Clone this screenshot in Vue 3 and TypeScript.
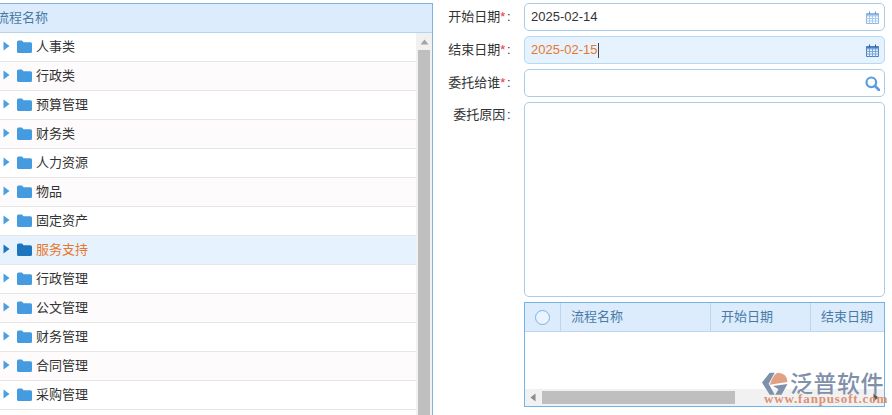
<script setup lang="ts">
interface Row { name: string; active?: boolean }
const rows: Row[] = [
  { name: '人事类' }, { name: '行政类' }, { name: '预算管理' }, { name: '财务类' },
  { name: '人力资源' }, { name: '物品' }, { name: '固定资产' },
  { name: '服务支持', active: true },
  { name: '行政管理' }, { name: '公文管理' }, { name: '财务管理' }, { name: '合同管理' }, { name: '采购管理' },
]
</script>

<template>
  <div class="page">
    <section class="tree">
      <div class="tree-head"><span>流程名称</span></div>
      <div class="tree-body">
        <ul class="tree-list">
          <li v-for="r in rows" :key="r.name" class="tree-row" :class="{ active: r.active }">
            <svg class="caret" width="7" height="10" viewBox="0 0 7 10"><path d="M0.5 0.5 L6.5 5 L0.5 9.5 Z" /></svg>
            <svg class="folder" width="15" height="13" viewBox="0 0 15 13"><path d="M0 2 Q0 0.5 1.5 0.5 H5 L6.5 2.2 H13.5 Q15 2.2 15 3.7 V11.5 Q15 13 13.5 13 H1.5 Q0 13 0 11.5 Z" /></svg>
            <span class="tree-name">{{ r.name }}</span>
          </li>
        </ul>
        <div class="vbar">
          <div class="vbar-up"><svg width="9" height="6" viewBox="0 0 9 6"><path d="M4.5 0.5 L8.5 5.5 H0.5 Z" /></svg></div>
          <div class="vbar-thumb"></div>
        </div>
      </div>
    </section>

    <section class="form">
      <label class="lbl">开始日期<i>*</i><b>:</b></label>
      <div class="field">
        <span class="val">2025-02-14</span>
        <svg class="cal" width="13" height="13" viewBox="0 0 13 13"><path d="M0.5 2.5 H12.5 V12.5 H0.5 Z" fill="#fff" stroke="#8db6e6"/><path d="M0.5 5 H12.5 M0.5 7.5 H12.5 M0.5 10 H12.5 M3.5 4.5 V12.5 M6.5 4.5 V12.5 M9.5 4.5 V12.5" stroke="#a9cbf0" fill="none"/><path d="M0.5 2.5 H12.5 V4.5 H0.5 Z" fill="#8db6e6"/><path d="M3.5 0.5 V3 M9.5 0.5 V3" stroke="#6d93c4" fill="none"/></svg>
      </div>

      <label class="lbl">结束日期<i>*</i><b>:</b></label>
      <div class="field focus">
        <span class="val orange">2025-02-15</span><span class="caret-line"></span>
        <svg class="cal" width="13" height="13" viewBox="0 0 13 13"><path d="M0.5 2.5 H12.5 V12.5 H0.5 Z" fill="#e6f3fe" stroke="#4a82bf"/><path d="M0.5 5 H12.5 M0.5 7.5 H12.5 M0.5 10 H12.5 M3.5 4.5 V12.5 M6.5 4.5 V12.5 M9.5 4.5 V12.5" stroke="#7ba7d8" fill="none"/><path d="M0.5 2.5 H12.5 V4.5 H0.5 Z" fill="#4a82bf"/><path d="M3.5 0.5 V3 M9.5 0.5 V3" stroke="#2f6199" fill="none"/></svg>
      </div>

      <label class="lbl">委托给谁<i>*</i><b>:</b></label>
      <div class="field">
        <svg class="search" width="15" height="15" viewBox="0 0 15 15"><circle cx="6.3" cy="6.3" r="4.8" fill="none" stroke="#5b9bdf" stroke-width="2.2"/><path d="M10 10 L14 14" stroke="#5b9bdf" stroke-width="2.6" stroke-linecap="round"/></svg>
      </div>

      <label class="lbl lbl-top">委托原因<b>:</b></label>
      <div class="area"></div>

      <div class="grid">
        <div class="grid-head">
          <div class="gh gh-check"><span class="radio"></span></div>
          <div class="gh gh-name">流程名称</div>
          <div class="gh gh-date">开始日期</div>
          <div class="gh gh-last">结束日期</div>
        </div>
        <div class="grid-body"></div>
        <div class="hbar">
          <svg class="hbar-left" width="6" height="9" viewBox="0 0 6 9"><path d="M5.5 0.5 V8.5 L0.5 4.5 Z" /></svg>
          <div class="hbar-thumb"></div>
          <svg class="hbar-right" width="6" height="9" viewBox="0 0 6 9"><path d="M0.5 0.5 V8.5 L5.5 4.5 Z" /></svg>
        </div>
      </div>
    </section>

    <div class="logo">
      <svg class="logo-mark" width="26" height="24" viewBox="0 0 26 24">
        <path d="M0 10.5 L7.7 0.7 L12.7 0.7 L6.7 11.7 L12.7 22.7 L7.7 22.7 Z" fill="#7f90ab"/>
        <path d="M7.7 12.7 Q11.5 1.5 16 0.7 Q25 1 25.5 10 Z" fill="#e2a184"/>
        <path d="M11 14 L25.5 12 L19.5 22.7 L13.3 22.7 L16.5 17.3 Z" fill="#7f90ab"/>
      </svg>
      <div class="logo-cn">泛普软件</div>
      <div class="logo-url">www.fanpusoft.com</div>
    </div>
  </div>
</template>

<style>
html, body { margin: 0; padding: 0; background: #fff; }
</style>

<style scoped>
.page {
  position: relative;
  display: flex;
  width: 892px;
  height: 415px;
  overflow: hidden;
  background: #fff;
  font-family: "Liberation Sans", "Noto Sans CJK SC", sans-serif;
  font-size: 13px;
  color: #333;
}
.tree {
  width: 433px;
  flex: none;
  box-sizing: border-box;
  margin-top: 3px;
  border-top: 1px solid #7fb4e2;
  border-right: 1px solid #7fb4e2;
  display: flex;
  flex-direction: column;
  min-height: 0;
  overflow: hidden;
}
.tree-head {
  flex: none;
  height: 28px;
  line-height: 27px;
  background: #dcecfd;
  border-bottom: 1px solid #b5d3ee;
  color: #4a7ba7;
  overflow: hidden;
}
.tree-head span { display: block; margin-left: -4px; white-space: nowrap; }
.tree-body { flex: 1; display: flex; min-height: 0; overflow: hidden; }
.tree-list {
  list-style: none;
  margin: 0;
  padding: 0;
  flex: 1;
  min-width: 0;
}
.tree-row {
  box-sizing: border-box;
  height: 29px;
  border-bottom: 1px solid #e6e6e6;
  display: flex;
  align-items: center;
  padding: 0 0 2px 3px;
  background: #fff;
}
.tree-row:nth-child(even) { background: #fdfbfb; }
.tree-row.active { background: #e6f3fe; }
.caret { flex: none; fill: #4b9fe0; }
.folder { flex: none; margin-left: 7px; margin-top: 1px; fill: #459be0; }
.active .caret { fill: #1c76bf; }
.active .folder { fill: #1c76bf; }
.tree-name { margin-left: 4px; color: #333; padding-bottom: 2px; }
.active .tree-name { color: #e8772c; }
.vbar {
  width: 16px;
  flex: none;
  display: flex;
  flex-direction: column;
  background: #f1f1f1;
}
.vbar-up {
  height: 17px;
  display: flex;
  align-items: center;
  justify-content: center;
  fill: #a3a3a3;
}
.vbar-thumb {
  flex: 1;
  margin: 0 2px;
  background: #bfbfbf;
}
.form {
  flex: 1;
  min-width: 0;
  display: grid;
  grid-template-columns: 91px 361px;
  grid-template-rows: 28px 28px 28px 195px 105px;
  row-gap: 5px;
  padding-top: 3px;
  box-sizing: border-box;
}
.lbl {
  text-align: right;
  padding-right: 13.5px;
  line-height: 28px;
  color: #333;
  white-space: nowrap;
}
.lbl i { font-style: normal; color: #f03030; }
.lbl b { font-weight: 400; margin-left: 1.5px; }
.lbl-top { line-height: 26px; }
.field {
  box-sizing: border-box;
  border: 1px solid #a9cde8;
  border-radius: 5px;
  display: flex;
  align-items: center;
  padding: 0 6px;
  background: #fff;
}
.field.focus { background: #e6f3fe; border-color: #b3daf7; }
.val { color: #333; line-height: 26px; }
.val.orange { color: #e8772c; }
.caret-line { width: 1px; height: 15px; background: #444; }
.cal, .search { margin-left: auto; flex: none; }
.cal { margin-right: -1px; }
.search { margin-right: -2px; }
.area {
  box-sizing: border-box;
  border: 1px solid #a9cde8;
  border-radius: 5px;
  background: #fff;
}
.grid {
  grid-column: 2;
  box-sizing: border-box;
  border: 1px solid #6fb5ea;
  display: flex;
  flex-direction: column;
  min-height: 0;
  overflow: hidden;
}
.grid-head {
  flex: none;
  height: 28px;
  display: flex;
  background: #dcecfd;
  border-bottom: 1px solid #bcd8f0;
  color: #4a7ba7;
}
.gh {
  box-sizing: border-box;
  border-right: 1px solid #bcd8f0;
  line-height: 27px;
  padding-left: 10px;
  flex: none;
}
.gh-check { width: 36px; padding: 0; display: flex; align-items: center; justify-content: center; }
.gh-name { width: 150px; }
.gh-date { width: 100px; }
.gh-last { flex: 1; border-right: 0; white-space: nowrap; overflow: hidden; }
.radio {
  width: 13px;
  height: 13px;
  border: 1px solid #79b3e3;
  border-radius: 50%;
  background: #e9f4fe;
}
.grid-body { flex: 1; background: #fff; }
.hbar {
  flex: none;
  height: 17px;
  background: #f1f1f1;
  display: flex;
  align-items: center;
  fill: #8c8c8c;
}
.hbar-left { margin-left: 5px; flex: none; }
.hbar-thumb { width: 193px; height: 13px; margin-left: 6px; background: #bfbfbf; flex: none; }
.hbar-right { margin-left: auto; margin-right: 5px; flex: none; fill: #555; }
.logo {
  position: absolute;
  left: 762px;
  top: 369px;
  width: 125px;
  height: 38px;
}
.logo-mark { position: absolute; left: 0; top: 3px; }
.logo-cn {
  position: absolute;
  left: 28px;
  top: 0;
  font-size: 23px;
  line-height: 26px;
  font-weight: 500;
  letter-spacing: 0.5px;
  color: #7f90ab;
  font-family: "Noto Sans CJK SC", sans-serif;
  white-space: nowrap;
}
.logo-url {
  position: absolute;
  left: 2px;
  top: 23px;
  font-family: "Liberation Serif", serif;
  font-size: 13px;
  line-height: 13px;
  font-weight: 700;
  letter-spacing: 0.85px;
  color: #dc9070;
  white-space: nowrap;
}
</style>
